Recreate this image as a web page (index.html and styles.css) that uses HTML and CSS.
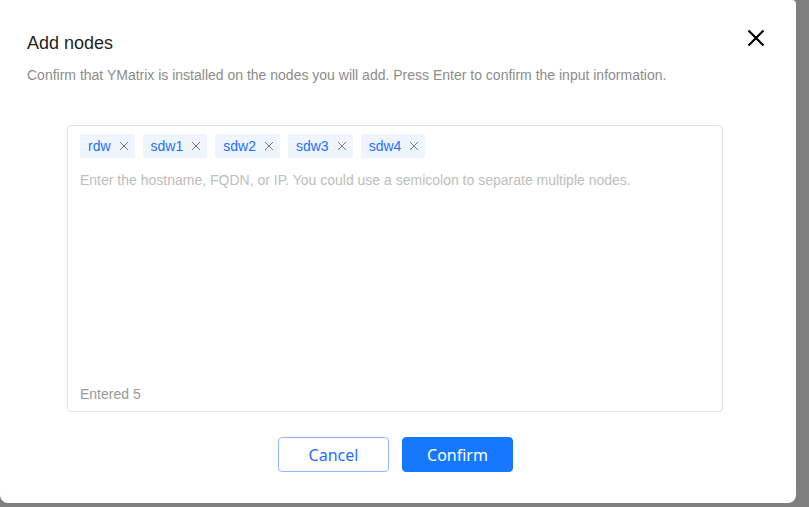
FILE: index.html
```html
<!DOCTYPE html>
<html>
<head>
<meta charset="utf-8">
<link rel="stylesheet" href="styles.css">
</head>
<body>
<div class="dialog">
  <div class="header">
    <div class="title">Add nodes</div>
    <button class="close" aria-label="Close">
      <svg width="18" height="18" viewBox="0 0 18 18"><path d="M1.5 1.5 L16.5 16.5 M16.5 1.5 L1.5 16.5" stroke="#000" stroke-width="2.2" fill="none"/></svg>
    </button>
  </div>
  <div class="desc">Confirm that YMatrix is installed on the nodes you will add. Press Enter to confirm the input information.</div>
  <div class="box">
    <div class="tags">
      <span class="tag">rdw<svg class="x" width="10" height="10" viewBox="0 0 10 10"><path d="M1 1 L9 9 M9 1 L1 9" stroke="#7a7a7a" stroke-width="1" fill="none"/></svg></span>
      <span class="tag">sdw1<svg class="x" width="10" height="10" viewBox="0 0 10 10"><path d="M1 1 L9 9 M9 1 L1 9" stroke="#7a7a7a" stroke-width="1" fill="none"/></svg></span>
      <span class="tag">sdw2<svg class="x" width="10" height="10" viewBox="0 0 10 10"><path d="M1 1 L9 9 M9 1 L1 9" stroke="#7a7a7a" stroke-width="1" fill="none"/></svg></span>
      <span class="tag">sdw3<svg class="x" width="10" height="10" viewBox="0 0 10 10"><path d="M1 1 L9 9 M9 1 L1 9" stroke="#7a7a7a" stroke-width="1" fill="none"/></svg></span>
      <span class="tag">sdw4<svg class="x" width="10" height="10" viewBox="0 0 10 10"><path d="M1 1 L9 9 M9 1 L1 9" stroke="#7a7a7a" stroke-width="1" fill="none"/></svg></span>
    </div>
    <div class="placeholder">Enter the hostname, FQDN, or IP. You could use a semicolon to separate multiple nodes.</div>
    <div class="count">Entered 5</div>
  </div>
  <div class="footer">
    <button class="btn cancel">Cancel</button>
    <button class="btn confirm">Confirm</button>
  </div>
</div>
</body>
</html>
```
FILE: styles.css
```css
html, body {
  margin: 0;
  padding: 0;
  background: #808080;
  font-family: "Liberation Sans", Arial, sans-serif;
}
.dialog {
  width: 796px;
  height: 503px;
  background: #fff;
  border-radius: 0 4px 8px 8px;
  box-sizing: border-box;
  padding: 29px 0 0 27px;
  display: flex;
  flex-direction: column;
}
.header {
  display: flex;
  justify-content: space-between;
  align-items: flex-start;
  padding-right: 31px;
}
.title {
  font-size: 18px;
  color: #1f1f1f;
  line-height: 28px;
}
.close {
  border: 0;
  background: none;
  padding: 0;
  margin-top: 0;
  width: 18px;
  height: 18px;
  display: flex;
}
.desc {
  margin-top: 8px;
  font-size: 14px;
  color: #8c8c8c;
  line-height: 20px;
}
.box {
  margin: 40px 0 0 40px;
  width: 656px;
  height: 287px;
  box-sizing: border-box;
  border: 1px solid #e3e3e3;
  border-radius: 4px;
  padding: 8px 12px 7px 12px;
  display: flex;
  flex-direction: column;
}
.tags {
  display: flex;
  gap: 8px;
}
.tag {
  display: inline-flex;
  align-items: center;
  height: 24px;
  padding: 0 6px 0 8px;
  background: #eff5ff;
  color: #1f6fff;
  font-size: 14px;
  border-radius: 2px;
}
.tag .x {
  margin-left: 8px;
}
.placeholder {
  margin-top: 12px;
  font-size: 14px;
  color: #bdbdbd;
  line-height: 20px;
}
.count {
  margin-top: auto;
  font-size: 14px;
  color: #999;
  line-height: 20px;
}
.footer {
  margin-top: 25px;
  display: flex;
  justify-content: center;
  gap: 13px;
  padding-right: 32px;
}
.btn {
  width: 111px;
  height: 35px;
  border-radius: 4px;
  font-size: 16px;
  font-family: "Noto Sans", "Liberation Sans", sans-serif;
  box-sizing: border-box;
  cursor: pointer;
}
.cancel {
  background: #fff;
  border: 1px solid #8fb9ff;
  color: #1f6fff;
}
.confirm {
  background: #1677ff;
  border: 1px solid #1677ff;
  color: #fff;
}
```
